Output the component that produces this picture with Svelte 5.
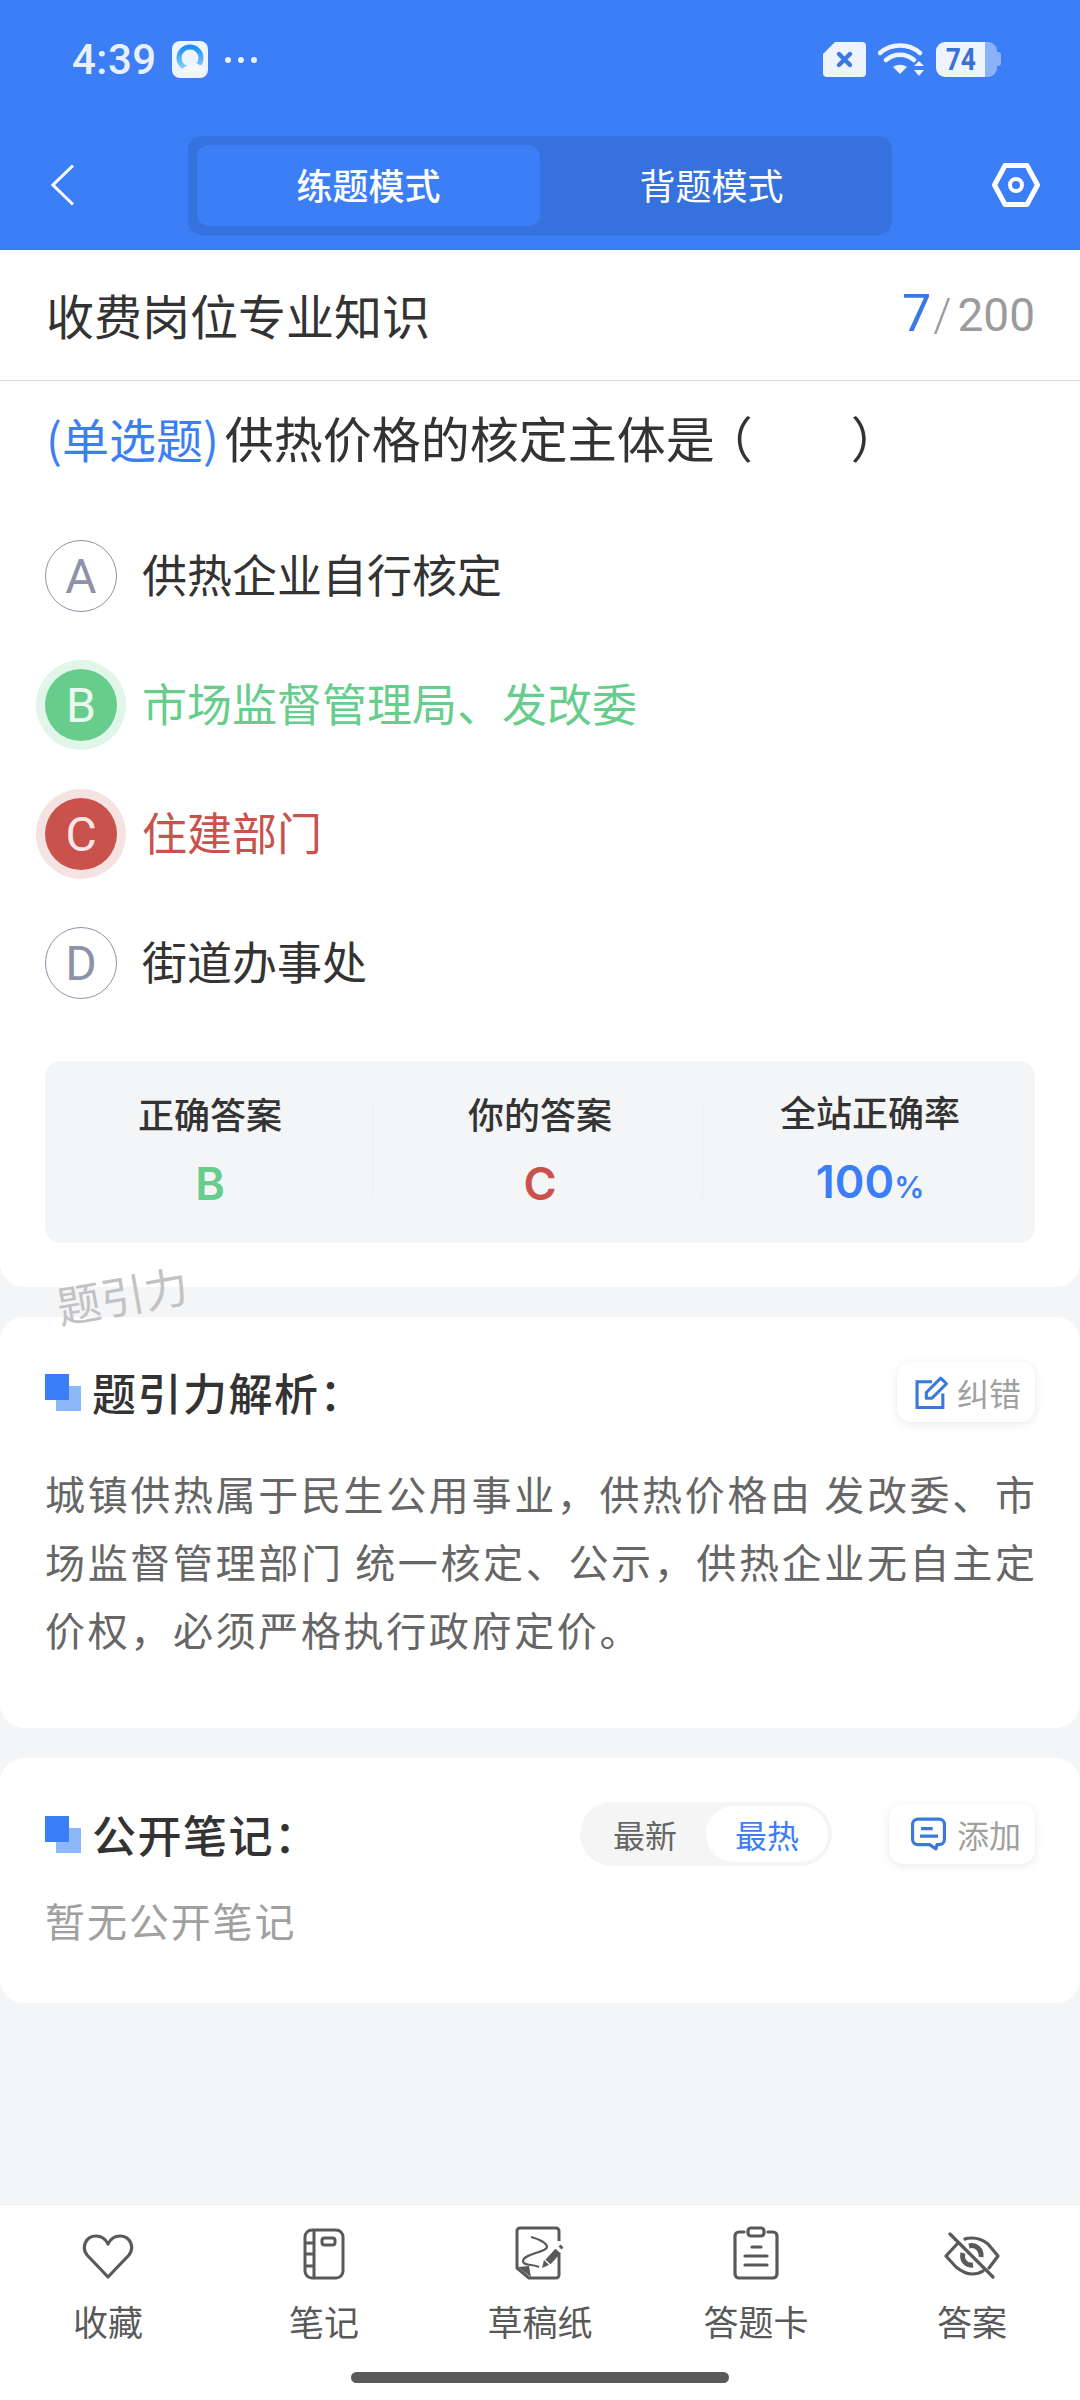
<script>
	const options = [
		{ key: 'A', text: '供热企业自行核定', state: '' },
		{ key: 'B', text: '市场监督管理局、发改委', state: 'right' },
		{ key: 'C', text: '住建部门', state: 'wrong' },
		{ key: 'D', text: '街道办事处', state: '' }
	];
</script>

<div class="page">
	<header class="top">
		<div class="status">
			<div class="status-left">
				<span class="time">4:39</span>
				<svg class="app-icon" width="36" height="37" viewBox="0 0 36 37">
					<defs>
						<linearGradient id="q" x1="0" y1="0" x2="0" y2="1">
							<stop offset="0" stop-color="#1b8ff5" />
							<stop offset="1" stop-color="#8fd0fa" />
						</linearGradient>
					</defs>
					<rect width="36" height="37" rx="8" fill="#eef4fd" />
					<circle cx="18" cy="17" r="11" fill="none" stroke="url(#q)" stroke-width="5" />
					<path d="M9 31c1-5 5-6 8-6 1-4 8-4 10-1 3 0 5 2 5 4v3z" fill="#f4f8fd" />
				</svg>
				<span class="dots"><i></i><i></i><i></i></span>
			</div>
			<div class="status-right">
				<svg width="43" height="36" viewBox="0 0 43 36">
					<path d="M12 1h27a4 4 0 0 1 4 4v27a4 4 0 0 1-4 4H4a4 4 0 0 1-4-4V13z" fill="#eef4fd" />
					<path d="M16 13l11 11M27 13L16 24" stroke="#3a78e0" stroke-width="4.4" stroke-linecap="round" />
				</svg>
				<svg width="46" height="36" viewBox="0 0 46 36">
					<path d="M2 12C13 2 31 2 42 12M8 19c8-7 20-7 28 0" fill="none" stroke="#eef4fd" stroke-width="4.4" stroke-linecap="round" />
					<path d="M15 26c4-3 10-3 14 0l-7 7z" fill="#eef4fd" />
					<path d="M41 20l5 5H36zM41 35l5-6H36z" fill="#eef4fd" />
				</svg>
				<div class="battery"><span class="level"><em>74</em></span><span class="rest"></span><span class="nub"></span></div>
			</div>
		</div>
		<nav class="nav">
			<svg class="back" width="24" height="42" viewBox="0 0 24 42">
				<path d="M22 1.500L2 21l20 19.500" fill="none" stroke="#fff" stroke-width="3" />
			</svg>
			<div class="switch">
				<span class="tab active">练题模式</span>
				<span class="tab">背题模式</span>
			</div>
			<svg class="hex" width="48" height="44" viewBox="0 0 48 44">
				<path d="M13 2.500h22L45.500 22 35 41.500H13L2.500 22z" fill="none" stroke="#fff" stroke-width="5" stroke-linejoin="round" />
				<circle cx="24" cy="22" r="6" fill="none" stroke="#fff" stroke-width="4" />
			</svg>
		</nav>
	</header>

	<section class="question">
		<div class="subject">
			<h1>收费岗位专业知识</h1>
			<div class="count"><b>7</b><span class="slash">/</span><span>200</span></div>
		</div>
		<p class="stem"><span class="type">(单选题)</span>供热价格的核定主体是<span class="paren">（&emsp;&emsp;）</span></p>
		<ul class="options">
			{#each options as o}
				<li class={o.state}>
					<span class="badge">{o.key}</span>
					<span class="opt-text">{o.text}</span>
				</li>
			{/each}
		</ul>
		<div class="result">
			<div class="cell"><div class="label">正确答案</div><div class="value green">B</div></div>
			<div class="cell"><div class="label">你的答案</div><div class="value red">C</div></div>
			<div class="cell"><div class="label">全站正确率</div><div class="value blue">100<small>%</small></div></div>
		</div>
	</section>

	<div class="watermark">题引力</div>

	<section class="card analysis">
		<div class="card-head">
			<span class="mark"></span>
			<h2>题引力解析：</h2>
			<button class="chip">
				<svg width="34" height="33" viewBox="0 0 32 32" fill="none" stroke="#3a78e0" stroke-width="3">
					<path d="M16 5.500H1.500v25h25V17" />
					<path d="M10.500 21.500v-5.500L24.500 2l5.500 5.500-14 14z" stroke-linejoin="round" />
				</svg>
				<span>纠错</span>
			</button>
		</div>
		<p class="body">城镇供热属于民生公用事业，供热价格由 发改委、市场监督管理部门 统一核定、公示，供热企业无自主定价权，必须严格执行政府定价。</p>
	</section>

	<section class="card notes">
		<div class="card-head">
			<span class="mark"></span>
			<h2>公开笔记：</h2>
			<div class="sort"><span>最新</span><span class="on">最热</span></div>
			<button class="chip">
				<svg width="37" height="34" viewBox="0 0 34 32" fill="none" stroke="#3a78e0" stroke-width="3">
					<path d="M7 2h20a5 5 0 0 1 5 5v14a5 5 0 0 1-5 5h-2l-1 4-6-4H7a5 5 0 0 1-5-5V7a5 5 0 0 1 5-5z" stroke-linejoin="round" />
					<path d="M10 11h11M9 18h17" />
				</svg>
				<span>添加</span>
			</button>
		</div>
		<p class="empty">暂无公开笔记</p>
	</section>

	<div class="spacer"></div>

	<footer class="bar">
		<div class="tools">
			<div class="tool">
				<svg width="52" height="46" viewBox="0 0 52 46" fill="none" stroke="#595959" stroke-width="3.200">
					<path d="M26 43L5 21C-1 13 4 2 14 2c5 0 9 2 12 8 3-6 7-8 12-8 10 0 15 11 9 19z" stroke-linejoin="round" />
				</svg>
				<span>收藏</span>
			</div>
			<div class="tool">
				<svg width="42" height="52" viewBox="0 0 42 52" fill="none" stroke="#595959" stroke-width="3">
					<rect x="2" y="2" width="38" height="48" rx="7" />
					<path d="M11 2v48M2 15h9M2 26h9M2 38h9" />
					<rect x="19" y="10" width="13" height="7" rx="2.500" />
				</svg>
				<span>笔记</span>
			</div>
			<div class="tool">
				<svg width="50" height="54" viewBox="0 0 50 54" fill="none" stroke="#595959" stroke-width="3">
					<path d="M44 15V5a3 3 0 0 0-3-3H5a3 3 0 0 0-3 3v37l12 10h27a3 3 0 0 0 3-3V27" stroke-linejoin="round" />
					<path d="M3 41l11-1 2 11z" fill="#595959" stroke="none" />
					<path d="M16 11C24 13 32 17 32 21 32 26 8 28 8 35 8 40 18 38 24 41" stroke-width="2.200" />
					<path d="M33 36L43 25" stroke-width="7" />
					<path d="M27 42l2-8 5 5z" fill="#595959" stroke="none" />
					<path d="M45 22l2-2" stroke-width="4" />
				</svg>
				<span>草稿纸</span>
			</div>
			<div class="tool">
				<svg width="46" height="54" viewBox="0 0 46 54" fill="none" stroke="#595959" stroke-width="3.200">
					<path d="M11 6H6a4 4 0 0 0-4 4v38a4 4 0 0 0 4 4h34a4 4 0 0 0 4-4V10a4 4 0 0 0-4-4h-5" stroke-linecap="round" />
					<rect x="15" y="2" width="16" height="8" rx="3" />
					<path d="M19 21h9M12 30h22M12 39h22" stroke-linecap="round" />
				</svg>
				<span>答题卡</span>
			</div>
			<div class="tool">
				<svg width="56" height="48" viewBox="0 0 56 48" fill="none" stroke="#595959" stroke-width="3.200">
					<path d="M14 11L2 24l10 11c5 4 10 7 16 7 4 0 8-1 11-3M21 7c2-1 5-1 7-1 6 0 11 2 16 6l10 12-9 12" stroke-linecap="round" stroke-linejoin="round" />
					<path d="M6 2l43 43" stroke-linecap="round" />
					<path d="M19 21c-2 7 3 13 10 12M25 14c7-2 13 4 12 11" stroke-width="5" />
				</svg>
				<span>答案</span>
			</div>
		</div>
		<div class="home"></div>
	</footer>
</div>

<style>
	:global(body) {
		margin: 0;
		background: #f4f5f7;
	}

	.page {
		width: 1080px;
		height: 2400px;
		display: flex;
		flex-direction: column;
		position: relative;
		overflow: hidden;
		background: #f4f5f7;
		font-family: 'Noto Sans CJK SC', 'Noto Sans', sans-serif;
		color: #333;
	}

	.top {
		background: #3b7ef6;
		height: 250px;
		box-sizing: border-box;
		flex: none;
	}

	.status {
		height: 136px;
		box-sizing: border-box;
		padding: 41px 79px 0 72px;
		display: flex;
		justify-content: space-between;
		align-items: flex-start;
	}

	.status-left {
		display: flex;
		align-items: center;
		gap: 15px;
	}

	.time {
		font-family: Roboto, sans-serif;
		font-size: 42px;
		font-weight: 500;
		line-height: 35px;
		color: #e8f0fd;
		letter-spacing: 0.5px;
	}

	.dots {
		display: flex;
		gap: 7px;
		margin-left: 2px;
	}

	.dots i {
		width: 6px;
		height: 6px;
		border-radius: 50%;
		background: #e8f0fd;
	}

	.status-right {
		display: flex;
		align-items: center;
		gap: 12px;
	}

	.battery {
		display: flex;
		align-items: center;
		height: 35px;
		width: 65px;
	}

	.level {
		width: 49px;
		height: 35px;
		background: #eef4fd;
		border-radius: 9px 0 0 9px;
		text-align: center;
	}

	.level em {
		display: inline-block;
		font-family: Roboto, sans-serif;
		font-style: normal;
		font-weight: 700;
		font-size: 31px;
		line-height: 35px;
		color: #3a70d8;
		transform: scaleX(0.85);
	}

	.rest {
		width: 12px;
		height: 35px;
		background: #8ab2f8;
		border-radius: 0 9px 9px 0;
	}

	.nub {
		width: 4px;
		height: 14px;
		background: #8ab2f8;
		border-radius: 0 3px 3px 0;
	}

	.nav {
		height: 114px;
		display: flex;
		align-items: flex-start;
		padding: 0 29px 0 51px;
	}

	.back {
		margin-top: 28px;
	}

	.switch {
		width: 704px;
		height: 99px;
		margin-left: 113px;
		margin-right: 100px;
		box-sizing: border-box;
		padding: 9px 9px;
		background: #3572de;
		border-radius: 14px;
		display: flex;
		flex: none;
	}

	.tab {
		flex: 1;
		display: flex;
		align-items: center;
		justify-content: center;
		color: #fff;
		font-size: 36px;
		border-radius: 12px;
		padding-bottom: 4px;
	}

	.tab.active {
		background: #3b7ef6;
		font-weight: 500;
	}

	.hex {
		margin-top: 27px;
		flex: none;
	}

	.question {
		background: #fff;
		border-radius: 0 0 24px 24px;
		height: 1037px;
		box-sizing: border-box;
		flex: none;
	}

	.subject {
		height: 131px;
		box-sizing: border-box;
		padding: 0 45px 3px 46px;
		display: flex;
		align-items: center;
		justify-content: space-between;
		border-bottom: 1px solid #dcdcdc;
	}

	h1 {
		margin: 0;
		font-size: 48px;
		font-weight: 400;
		color: #333;
	}

	.count {
		display: flex;
		align-items: baseline;
		font-family: Roboto, sans-serif;
		font-size: 46px;
		color: #9b9b9b;
	}

	.count b {
		font-weight: 400;
		font-size: 52px;
		color: #3a78e8;
		margin-right: 2px;
	}

	.slash {
		margin-right: 6px;
		font-weight: 300;
	}

	.stem {
		margin: 0;
		padding: 24px 46px 0;
		font-size: 49px;
		line-height: 64px;
		color: #333;
		white-space: nowrap;
	}

	.type {
		color: #3b7ef6;
		font-size: 47px;
		margin-right: 6px;
	}

	.paren {
		margin-left: -11px;
	}

	.options {
		list-style: none;
		margin: 70px 0 0;
		padding: 0 45px;
		display: flex;
		flex-direction: column;
		gap: 57px;
	}

	.options li {
		display: flex;
		align-items: center;
		gap: 25px;
		font-size: 45px;
		height: 72px;
		color: #333;
	}

	.opt-text {
		padding-bottom: 6px;
	}

	.badge {
		width: 72px;
		height: 72px;
		box-sizing: border-box;
		border: 1.500px solid #8e92a8;
		border-radius: 50%;
		display: flex;
		align-items: center;
		justify-content: center;
		font-family: Roboto, sans-serif;
		font-size: 48px;
		color: #8e92a8;
		flex: none;
	}

	li.right {
		color: #67cd8c;
	}

	li.right .badge {
		background: #67cd8c;
		border: none;
		color: #e9f9ef;
		box-shadow: 0 0 0 9px #e1f6e9;
	}

	li.wrong {
		color: #c9524d;
	}

	li.wrong .badge {
		background: #c9524d;
		border: none;
		color: #f9e6e5;
		box-shadow: 0 0 0 9px #f5e3e3;
	}

	.result {
		margin: 62px 45px 0;
		height: 182px;
		box-sizing: border-box;
		padding-bottom: 6px;
		background: #f4f5f7;
		border-radius: 16px;
		display: flex;
		align-items: center;
	}

	.cell {
		flex: 1;
		text-align: center;
		position: relative;
	}

	.cell + .cell::before {
		content: '';
		position: absolute;
		left: -3px;
		top: 14px;
		bottom: 14px;
		width: 1px;
		background: #ebecee;
	}

	.label {
		font-size: 36px;
		font-weight: 500;
		line-height: 50px;
		color: #333;
		margin-top: -1px;
	}

	.value {
		font-family: 'Inter', Roboto, sans-serif;
		font-size: 45px;
		font-weight: 600;
		line-height: 50px;
		margin-top: 21px;
	}

	.value small {
		font-size: 30px;
	}

	.green {
		color: #67cd8c;
	}

	.red {
		color: #c9524d;
	}

	.blue {
		color: #3b7ef6;
	}

	.watermark {
		position: absolute;
		left: 56px;
		top: 1266px;
		font-size: 44px;
		line-height: 56px;
		color: #c2c2c2;
		transform: rotate(-10deg);
		z-index: 2;
	}

	.card {
		background: #fff;
		border-radius: 24px;
		margin-top: 30px;
		box-sizing: border-box;
		flex: none;
	}

	.analysis {
		height: 411px;
		padding: 45px 45px 0;
	}

	.notes {
		height: 245px;
		padding: 46px 45px 0;
	}

	.card-head {
		display: flex;
		align-items: center;
		height: 60px;
	}

	.mark {
		width: 36px;
		height: 37px;
		position: relative;
		flex: none;
		margin-right: 11px;
		background: linear-gradient(#3b7ef6, #3b7ef6) 0 0 / 24px 26px no-repeat,
			linear-gradient(#8cb8fa, #8cb8fa) 11px 12px / 25px 25px no-repeat;
	}

	h2 {
		margin: 0;
		font-size: 44px;
		font-weight: 500;
		color: #333;
		letter-spacing: 1.500px;
		flex: 1;
	}

	.chip {
		display: flex;
		align-items: center;
		gap: 8px;
		border: none;
		height: 60px;
		padding: 0 14px 0 18px;
		background: #fff;
		border-radius: 14px;
		box-shadow: 0 2px 10px rgba(0, 0, 0, 0.09);
		font-family: inherit;
		font-size: 32px;
		color: #a0a0a0;
	}

	.notes .chip {
		gap: 10px;
		padding-left: 21px;
	}

	.body {
		margin: 37px -10px 0 0;
		font-size: 40px;
		letter-spacing: 2.650px;
		line-height: 68px;
		color: #666;
	}

	.sort {
		display: flex;
		align-items: center;
		height: 64px;
		width: 252px;
		background: #f5f5f5;
		border-radius: 32px;
		font-size: 32px;
		color: #666;
		margin-right: 57px;
		box-sizing: border-box;
		padding: 4px;
	}

	.sort span {
		flex: 1;
		text-align: center;
		line-height: 56px;
		border-radius: 28px;
	}

	.sort .on {
		background: #fff;
		color: #3b7ef6;
	}

	.empty {
		margin: 26px 0 0;
		font-size: 40px;
		letter-spacing: 1.900px;
		line-height: 60px;
		color: #a0a0a0;
	}

	.spacer {
		flex: 1;
	}

	.bar {
		background: #fff;
		height: 196px;
		flex: none;
		box-sizing: border-box;
		border-top: 1px solid #eeeeee;
	}

	.tools {
		display: grid;
		grid-template-columns: repeat(5, 1fr);
		height: 140px;
	}

	.tool {
		display: flex;
		flex-direction: column;
		align-items: center;
		justify-content: flex-end;
		font-size: 35px;
		line-height: 48px;
		color: #595959;
		gap: 17px;
	}

	.home {
		width: 378px;
		height: 11px;
		border-radius: 6px;
		background: #595959;
		margin: 27px auto 0;
	}
</style>
